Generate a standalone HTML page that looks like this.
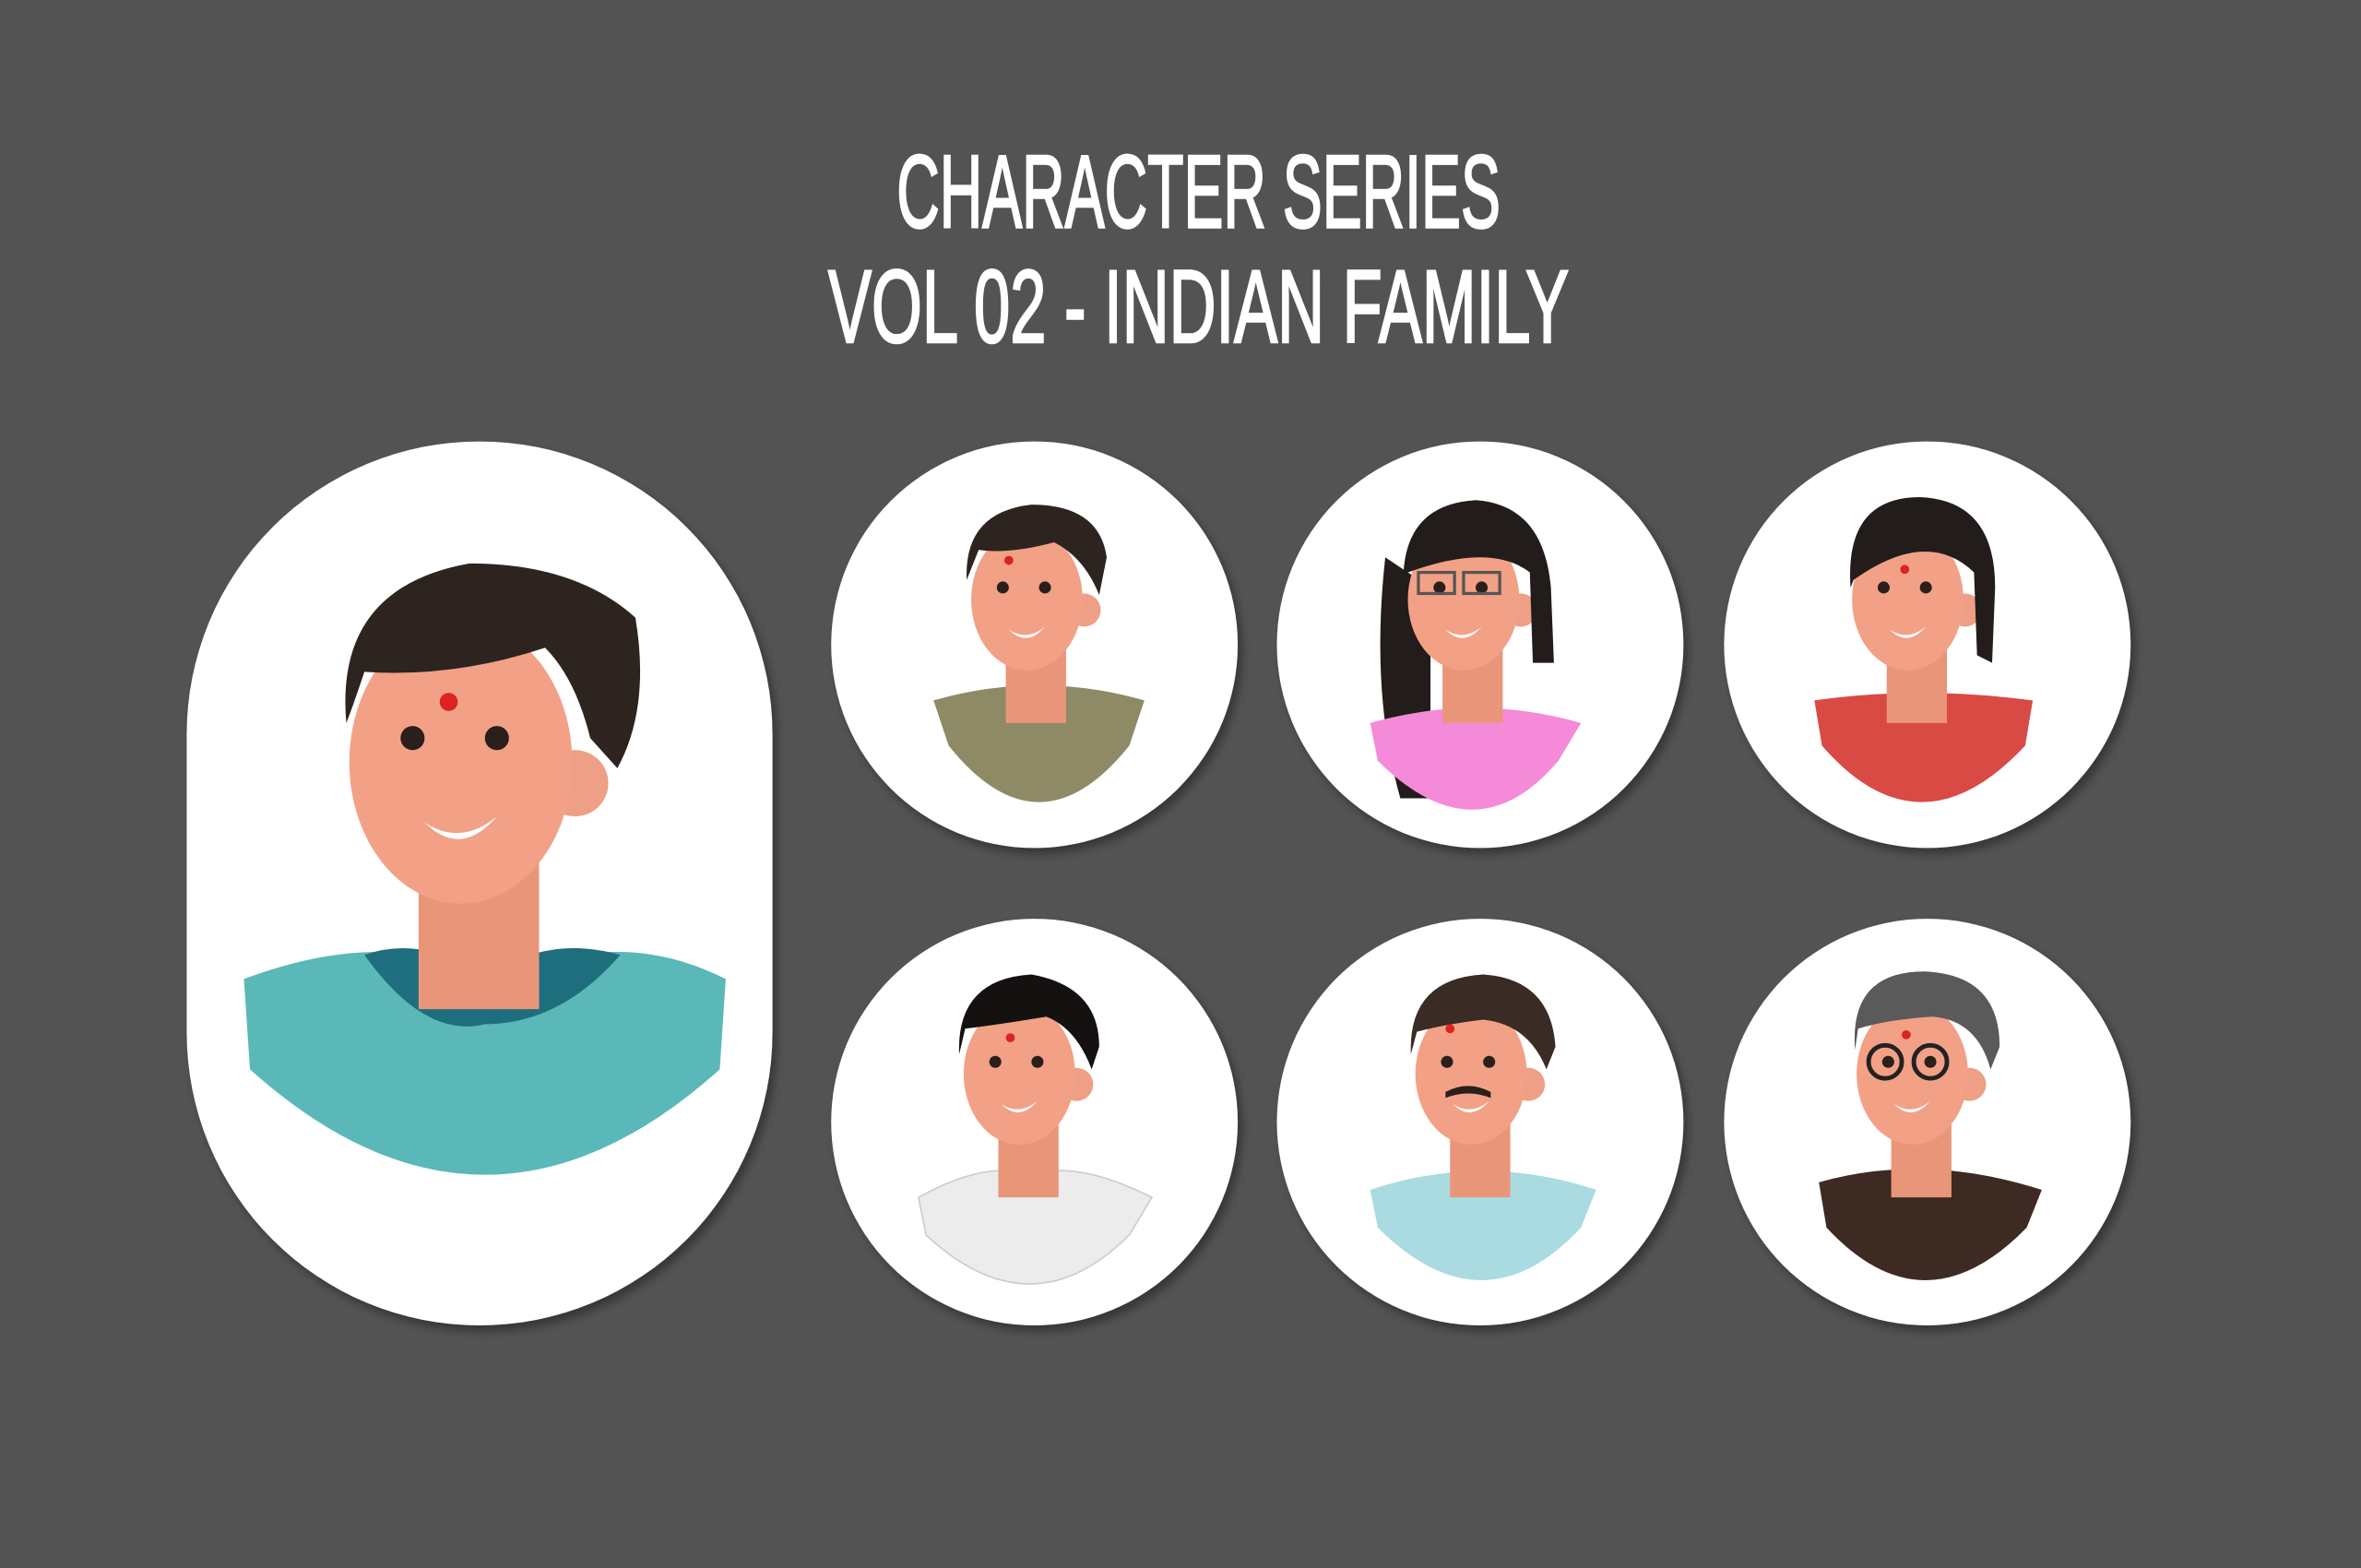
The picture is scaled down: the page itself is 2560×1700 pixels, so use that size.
<!DOCTYPE html>
<html><head><meta charset="utf-8"><style>
html,body{margin:0;padding:0;background:#535353;width:2560px;height:1700px;overflow:hidden}
svg{display:block}
</style></head><body>
<svg width="2560" height="1700" viewBox="0 0 1568 1041" xmlns="http://www.w3.org/2000/svg">
<defs>
<filter id="sh" x="-20%" y="-20%" width="140%" height="140%"><feDropShadow dx="3" dy="4" stdDeviation="3" flood-color="#000" flood-opacity="0.35"/></filter>
<g id="face">
<rect x="-22" y="-15" width="40" height="55" fill="#e9957a"/>
<circle cx="30" cy="-35" r="11" fill="#ee9f85"/>
<ellipse cx="-8" cy="-42" rx="37" ry="47" fill="#f2a186"/>
<circle cx="-24" cy="-50" r="4" fill="#2a1f1b"/>
<circle cx="4" cy="-50" r="4" fill="#2a1f1b"/>
<path d="M-20 -22 Q-8 -14 4 -24 Q-8 -10 -20 -22Z" fill="#fff"/>
</g>
<clipPath id="cp0"><rect x="124" y="293" width="389" height="587" rx="194.5"/></clipPath>
<clipPath id="c1"><circle cx="687" cy="428" r="135"/></clipPath>
<clipPath id="c2"><circle cx="983" cy="428" r="135"/></clipPath>
<clipPath id="c3"><circle cx="1280" cy="428" r="135"/></clipPath>
<clipPath id="c4"><circle cx="687" cy="745" r="135"/></clipPath>
<clipPath id="c5"><circle cx="983" cy="745" r="135"/></clipPath>
<clipPath id="c6"><circle cx="1280" cy="745" r="135"/></clipPath>
</defs>
<rect width="1568" height="1041" fill="#535353"/>
<g fill="#fff" stroke="#fff" stroke-width="1.6" font-family="Liberation Sans Narrow, Liberation Sans, sans-serif" font-size="69">
<text x="796" y="151" text-anchor="middle" textLength="401" lengthAdjust="spacingAndGlyphs">CHARACTER SERIES</text>
<text x="796" y="227" text-anchor="middle" textLength="492" lengthAdjust="spacingAndGlyphs">VOL 02 - INDIAN FAMILY</text>
</g>

<rect x="124" y="293" width="389" height="587" rx="194.5" fill="#fff" filter="url(#sh)"/>
<g clip-path="url(#cp0)">
<g transform="translate(322,590) scale(2)">
<path d="M-80 30 Q-40 15 -10 25 L20 25 Q50 15 80 30 L78 60 Q0 130 -78 60Z" fill="#5ab8b8"/>
<path d="M-40 22 Q-20 50 0 45 Q25 45 45 22 Q20 15 0 30 Q-20 15 -40 22Z" fill="#1f6e7e"/>
<use href="#face"/>
<path d="M-46 -55 Q-50 -100 -5 -108 Q30 -108 50 -90 Q55 -60 44 -40 L35 -50 Q30 -70 20 -80 Q-10 -70 -40 -72 Q-44 -60 -46 -55Z" fill="#2d2420"/>
<circle cx="-12" cy="-62" r="3" fill="#d22"/>
</g>
</g>

<g filter="url(#sh)">
<circle cx="687" cy="428" r="135" fill="#fff"/><circle cx="983" cy="428" r="135" fill="#fff"/><circle cx="1280" cy="428" r="135" fill="#fff"/>
<circle cx="687" cy="745" r="135" fill="#fff"/><circle cx="983" cy="745" r="135" fill="#fff"/><circle cx="1280" cy="745" r="135" fill="#fff"/>
</g>

<g clip-path="url(#c1)"><g transform="translate(690,440)">
<path d="M-70 25 Q0 5 70 25 L60 55 Q0 130 -60 55Z" fill="#8e8a66"/>
<use href="#face"/>
<path d="M-48 -55 Q-50 -100 -5 -105 Q40 -105 45 -70 L40 -45 Q30 -70 10 -80 Q-20 -72 -40 -75Z" fill="#2d2420"/>
<circle cx="-20" cy="-68" r="3" fill="#d22"/>
</g></g>
<g clip-path="url(#c2)"><g transform="translate(980,440)">
<path d="M-60 -70 Q-70 20 -50 90 L-30 90 L-30 -50Z" fill="#221c1a"/>
<path d="M-70 40 Q0 20 70 40 L55 65 Q0 130 -65 65Z" fill="#f58ad8"/>
<use href="#face"/>
<path d="M-48 -50 Q-50 -105 0 -108 Q45 -105 50 -50 L52 0 L38 0 L36 -60 Q10 -80 -45 -60Z" fill="#221c1a"/>
<rect x="-38" y="-60" width="24" height="14" fill="none" stroke="#555" stroke-width="2"/><rect x="-8" y="-60" width="24" height="14" fill="none" stroke="#555" stroke-width="2"/>
</g></g>
<g clip-path="url(#c3)"><g transform="translate(1275,440)">
<path d="M-70 25 Q0 15 75 25 L70 55 Q0 130 -65 55Z" fill="#d94a45"/>
<use href="#face"/>
<path d="M-46 -50 Q-50 -110 0 -110 Q50 -108 50 -50 L48 0 L38 -5 L36 -60 Q5 -90 -44 -55Z" fill="#221c1a"/>
<circle cx="-10" cy="-62" r="3" fill="#d22"/>
</g></g>
<g clip-path="url(#c4)"><g transform="translate(685,755)">
<path d="M-75 40 Q-30 15 0 25 Q30 15 80 40 L65 65 Q0 130 -70 65Z" fill="#ececec" stroke="#ccc"/>
<use href="#face"/>
<path d="M-48 -55 Q-50 -105 0 -108 Q45 -100 45 -60 L40 -45 Q30 -72 10 -80 Q-20 -75 -44 -72Z" fill="#141110"/>
<circle cx="-14" cy="-66" r="3" fill="#d22"/>
</g></g>
<g clip-path="url(#c5)"><g transform="translate(985,755)">
<path d="M-75 35 Q0 10 75 35 L65 60 Q0 130 -70 60Z" fill="#a9dbe0"/>
<use href="#face"/>
<path d="M-25 -30 Q-10 -38 5 -30 L5 -26 Q-10 -32 -25 -26Z" fill="#2a1f1b"/>
<path d="M-48 -55 Q-50 -105 0 -108 Q45 -105 48 -60 L42 -45 Q30 -75 0 -78 Q-25 -75 -44 -70Z" fill="#3a2b24"/>
<circle cx="-22" cy="-72" r="3" fill="#d22"/>
</g></g>
<g clip-path="url(#c6)"><g transform="translate(1278,755)">
<path d="M-70 30 Q0 10 78 35 L68 60 Q0 130 -65 60Z" fill="#3d2a22"/>
<use href="#face"/>
<circle cx="-26" cy="-50" r="11" fill="none" stroke="#222" stroke-width="3"/><circle cx="4" cy="-50" r="11" fill="none" stroke="#222" stroke-width="3"/>
<path d="M-46 -58 Q-50 -110 0 -110 Q50 -108 50 -60 L44 -45 Q35 -78 5 -80 Q-25 -78 -44 -72Z" fill="#5a5a5a"/>
<circle cx="-12" cy="-68" r="3" fill="#d22"/>
</g></g>
</svg>
</body></html>
